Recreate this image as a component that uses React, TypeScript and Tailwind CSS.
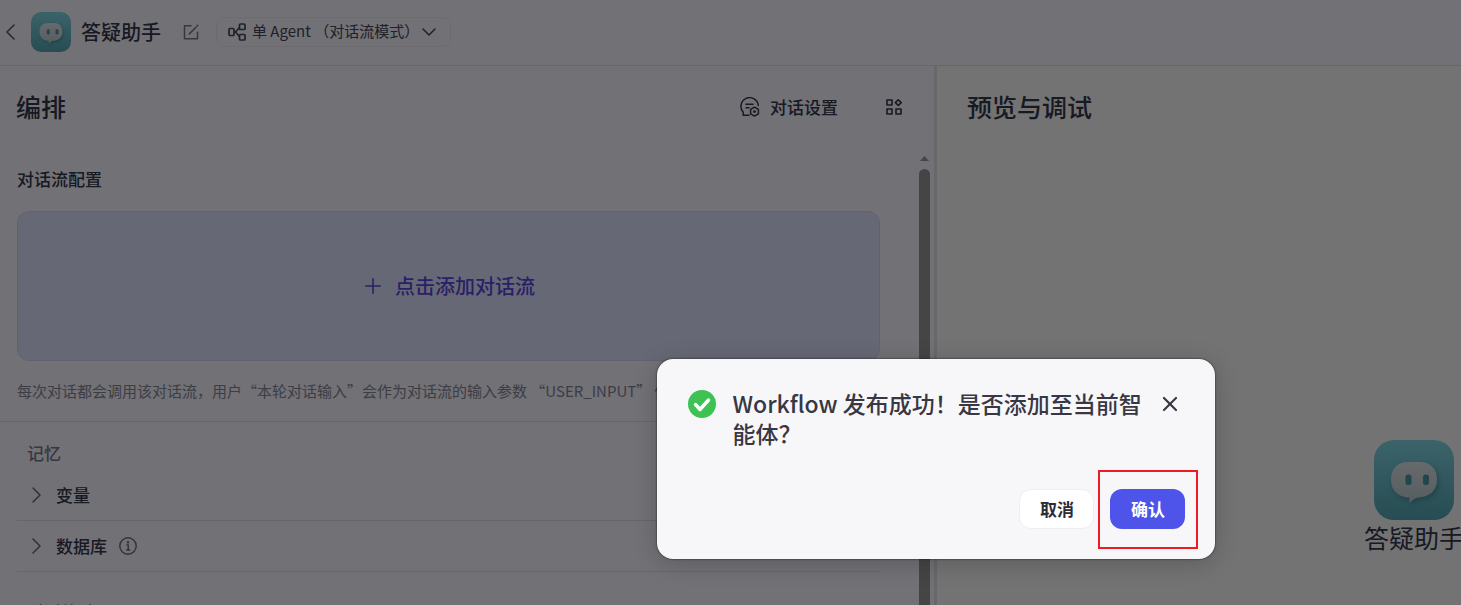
import { useState } from 'react'
import type { ReactNode } from 'react'
import { X } from 'lucide-react'

function BotAvatar({ className }: { className: string }) {
  return (
    <svg viewBox="0 0 80 80" className={className} aria-hidden="true">
      <defs>
        <linearGradient id="bot-bg" x1="0" y1="0" x2="0" y2="1">
          <stop offset="0" stopColor="#80d8e4" />
          <stop offset="1" stopColor="#56a8b6" />
        </linearGradient>
        <linearGradient id="bot-face" x1="0" y1="0" x2="0" y2="1">
          <stop offset="0" stopColor="#e2e6ea" />
          <stop offset="1" stopColor="#bccdd2" />
        </linearGradient>
        <filter id="bot-shadow" x="-20%" y="-20%" width="150%" height="150%">
          <feDropShadow dx="2" dy="3" stdDeviation="2.5" floodColor="#2b6f7b" floodOpacity="0.5" />
        </filter>
      </defs>
      <rect width="80" height="80" rx="20" fill="url(#bot-bg)" />
      <path
        d="M35 22h10c11 0 18 6 18 17.500S55 57 44 57.500c-3 .5-5 2-7.500 4.500-.5.500-1 .2-1-.5V57.500C25 57.500 17 51 17 39.500S24 22 35 22z"
        fill="url(#bot-face)"
        filter="url(#bot-shadow)"
      />
      <rect x="31.500" y="34.500" width="6" height="10.500" rx="2.500" fill="#4e98a5" />
      <rect x="49" y="34.500" width="6" height="10.500" rx="2.500" fill="#4e98a5" />
    </svg>
  )
}

function ChevronIcon({ direction, className }: { direction: 'left' | 'right' | 'down'; className: string }) {
  const paths = {
    left: 'M14 3 7 10l7 7',
    right: 'm7 3 7 7-7 7',
    down: 'm4 7 6 6 6-6',
  }
  return (
    <svg viewBox="0 0 20 20" className={className} fill="none" stroke="currentColor" strokeWidth="1.500" strokeLinecap="round" strokeLinejoin="round" aria-hidden="true">
      <path d={paths[direction]} />
    </svg>
  )
}

function EditIcon() {
  return (
    <svg viewBox="0 0 16 16" className="size-4" fill="none" stroke="currentColor" strokeWidth="1.500" strokeLinecap="round" aria-hidden="true">
      <path d="M8 1.700H1.500v13h13V8.200M6.300 9.900 13 3.200" strokeLinejoin="round" />
      <path d="m14.300 1.800.2-.2" strokeWidth="2" />
    </svg>
  )
}

function AgentIcon() {
  return (
    <svg viewBox="0 0 18 18" className="size-[18px]" fill="none" stroke="currentColor" strokeWidth="1.700" strokeLinejoin="round" aria-hidden="true">
      <rect x="1" y="5.500" width="5" height="7" rx="1" />
      <rect x="11.500" y="1" width="5.500" height="5.500" rx="1" />
      <rect x="11.500" y="11.500" width="5.500" height="5.500" rx="1" />
      <path d="M6 9h1.500l4-4.500M7.500 9l4 4.500" />
    </svg>
  )
}

function ChatSettingIcon() {
  return (
    <svg viewBox="0 0 20 20" className="size-5" fill="none" stroke="currentColor" strokeWidth="1.500" strokeLinecap="round" strokeLinejoin="round" aria-hidden="true">
      <path d="M18.300 8.500A8.700 8.700 0 1 0 3.200 15.200V18.200H9" />
      <path d="M6 7.300h7M6 10.800h3" />
      <path d="M14.500 10.200l3.900 2.200v4.500l-3.900 2.200-3.900-2.200v-4.500z" />
      <circle cx="14.500" cy="14.600" r="0.700" />
    </svg>
  )
}

function AppsIcon() {
  return (
    <svg viewBox="0 0 16 16" className="size-4" fill="none" stroke="currentColor" strokeWidth="1.600" strokeLinejoin="round" aria-hidden="true">
      <rect x="1" y="1" width="5" height="5" />
      <rect x="1" y="10" width="5" height="5" />
      <rect x="10" y="10" width="5" height="5" />
      <path d="m12.300.7 2.900 2.900-2.900 2.900-2.900-2.900z" />
    </svg>
  )
}

function InfoIcon() {
  return (
    <svg viewBox="0 0 18 18" className="size-[18px]" fill="none" stroke="currentColor" strokeWidth="1.400" aria-hidden="true">
      <circle cx="9" cy="9" r="8.200" />
      <path d="M7.300 7.900h1.900v5M7.200 13h4" />
      <circle cx="9" cy="5.300" r="0.500" fill="currentColor" />
    </svg>
  )
}

function SuccessIcon() {
  return (
    <svg viewBox="0 0 28 28" className="size-7 shrink-0" fill="none" aria-hidden="true">
      <circle cx="14" cy="14" r="14" fill="#3ec254" />
      <path d="m7.500 14.500 4.500 5 8.500-9.500" stroke="#fff" strokeWidth="3.400" strokeLinecap="round" strokeLinejoin="round" />
    </svg>
  )
}

function SectionRow({ title, children }: { title: string; children?: ReactNode }) {
  return (
    <div className="flex h-[51px] items-center border-b border-[#dcdce8] pl-[9px]">
      <button type="button" className="flex items-center gap-2.5 text-[17px] font-medium">
        <ChevronIcon direction="right" className="size-5 text-[#6a6a7e]" />
        {title}
      </button>
      {children}
    </div>
  )
}

function Header() {
  return (
    <header className="flex h-[66px] items-center border-b border-[#dcdce6] bg-[#f8f6ff] pb-0.5">
      <button type="button" aria-label="返回" className="text-[#55566a]">
        <ChevronIcon direction="left" className="size-5" />
      </button>
      <BotAvatar className="ml-[11px] size-10" />
      <h1 className="ml-2.5 text-xl font-medium">答疑助手</h1>
      <button type="button" aria-label="编辑" className="ml-[22px] text-[#77788a]">
        <EditIcon />
      </button>
      <button
        type="button"
        className="ml-[17px] flex h-[30px] items-center rounded-lg border border-[#eceaf4] px-[11px] text-[15px] text-[#45475c]"
      >
        <AgentIcon />
        <span className="ml-1.5">单 Agent （对话流模式）</span>
        <ChevronIcon direction="down" className="size-5" />
      </button>
    </header>
  )
}

function OrchestrationPane() {
  return (
    <section className="flex w-[calc(64%+2px)] shrink-0 flex-col border-r-3 border-[#e2e1ec] bg-[#f8f6ff]">
      <div className="flex h-[83px] shrink-0 items-center pr-8 pb-0.5 pl-4">
        <h2 className="flex-1 text-[25px] font-medium">编排</h2>
        <button type="button" className="flex items-center gap-2.5 text-[17px] font-medium">
          <ChatSettingIcon />
          对话设置
        </button>
        <button type="button" aria-label="布局" className="ml-12">
          <AppsIcon />
        </button>
      </div>

      <div className="flex min-h-0 flex-1">
        <div className="min-w-0 flex-1 overflow-hidden">
          <div className="border-b border-[#dcdce8] pt-[18px] pr-9 pl-[17px]">
            <h3 className="text-[17px] leading-6 font-medium">对话流配置</h3>
            <button
              type="button"
              className="mt-5 flex h-[150px] w-full items-center justify-center gap-3.5 rounded-xl border border-[#d0d6fa] bg-[#e0e3ff] pl-[3px] text-xl font-medium text-[#5a48e0]"
            >
              <svg viewBox="0 0 16 16" className="size-4" stroke="currentColor" strokeWidth="1.600" strokeLinecap="round" aria-hidden="true">
                <path d="M8 .8v14.400M.8 8h14.400" />
              </svg>
              点击添加对话流
            </button>
            <p className="mt-[18px] mb-[18px] overflow-hidden text-[15px] leading-6 whitespace-nowrap text-[#85869a]">
              每次对话都会调用该对话流，用户“本轮对话输入”会作为对话流的输入参数 “USER_INPUT” 传入
            </p>
          </div>

          <div className="pt-[19px] pr-9 pl-[17px]">
            <h3 className="pl-2.5 text-[17px] leading-6 font-medium text-[#77798e]">记忆</h3>
            <div className="mt-[5px]">
              <SectionRow title="变量" />
              <SectionRow title="数据库">
                <button type="button" aria-label="数据库说明" className="ml-3 text-[#686a7e]">
                  <InfoIcon />
                </button>
              </SectionRow>
            </div>
            <h3 className="pt-7 pl-2.5 text-[17px] leading-6 font-medium text-[#77798e]">对话体验</h3>
          </div>
        </div>

        {/* Scrollbar */}
        <div className="flex w-[18px] flex-col gap-2 pt-[7px] pl-[3px]">
          <svg viewBox="0 0 9 5" className="ml-px h-[5px] w-[9px] shrink-0" fill="#969698" aria-hidden="true">
            <path d="M4.500 0 9 5H0z" />
          </svg>
          <div className="w-[11px] flex-1 rounded-t-full bg-[#969698]" />
        </div>
      </div>
    </section>
  )
}

function PreviewPane() {
  return (
    <section className="flex min-w-0 flex-1 flex-col overflow-hidden bg-[#fafafa]">
      <h2 className="flex h-[83px] items-center pb-0.5 pl-[30px] text-[25px] font-medium">预览与调试</h2>
      <div className="-mr-[3px] flex flex-1 flex-col items-end justify-end pb-[51px]">
        <div className="flex flex-col items-center">
          <BotAvatar className="size-20" />
          <p className="text-[25px] leading-[34px] whitespace-nowrap">答疑助手</p>
        </div>
      </div>
    </section>
  )
}

function PublishDialog({ onClose }: { onClose: () => void }) {
  return (
    <div
      role="dialog"
      aria-modal="true"
      aria-labelledby="publish-title"
      className="absolute top-[359px] left-[45%] w-[558px] rounded-2xl bg-[#f7f7fa] pt-[29px] pr-[17px] pb-2.5 pl-[31px] text-[#383743] shadow-[0_0_2px_rgba(0,0,0,0.8),0_4px_24px_rgba(0,0,0,0.2)]"
    >
      <div className="flex items-start">
        <div className="pt-0.5">
          <SuccessIcon />
        </div>
        <h2 id="publish-title" className="ml-4 flex-1 text-[23px] leading-[30px] font-medium">
          Workflow 发布成功！是否添加至当前智能体？
        </h2>
        <button type="button" aria-label="关闭" onClick={onClose} className="mr-4 ml-2.5 pt-1">
          <X className="size-6" strokeWidth={2.2} />
        </button>
      </div>
      <div className="mt-[22px] flex items-start justify-end gap-1">
        <button
          type="button"
          onClick={onClose}
          className="mt-[19px] h-10 w-[75px] rounded-xl border border-[#eeeef3] bg-white text-[17px] font-semibold text-[#2c2b36]"
        >
          取消
        </button>
        <div className="border-2 border-[#ed1c24] pt-[17px] pr-[11px] pb-[18px] pl-2.5">
          <button
            type="button"
            onClick={onClose}
            className="block h-10 w-[75px] rounded-xl bg-[#4e53ea] text-[17px] font-semibold text-white"
          >
            确认
          </button>
        </div>
      </div>
    </div>
  )
}

export default function App() {
  const [open, setOpen] = useState(true)

  return (
    <div className="relative flex h-screen flex-col overflow-hidden font-['Noto_Sans_CJK_SC',sans-serif] text-[#34374c]">
      <Header />
      <main className="flex min-h-0 flex-1">
        <OrchestrationPane />
        <PreviewPane />
      </main>

      {open && (
        <div className="absolute inset-0 bg-black/54">
          <PublishDialog onClose={() => setOpen(false)} />
        </div>
      )}
    </div>
  )
}
